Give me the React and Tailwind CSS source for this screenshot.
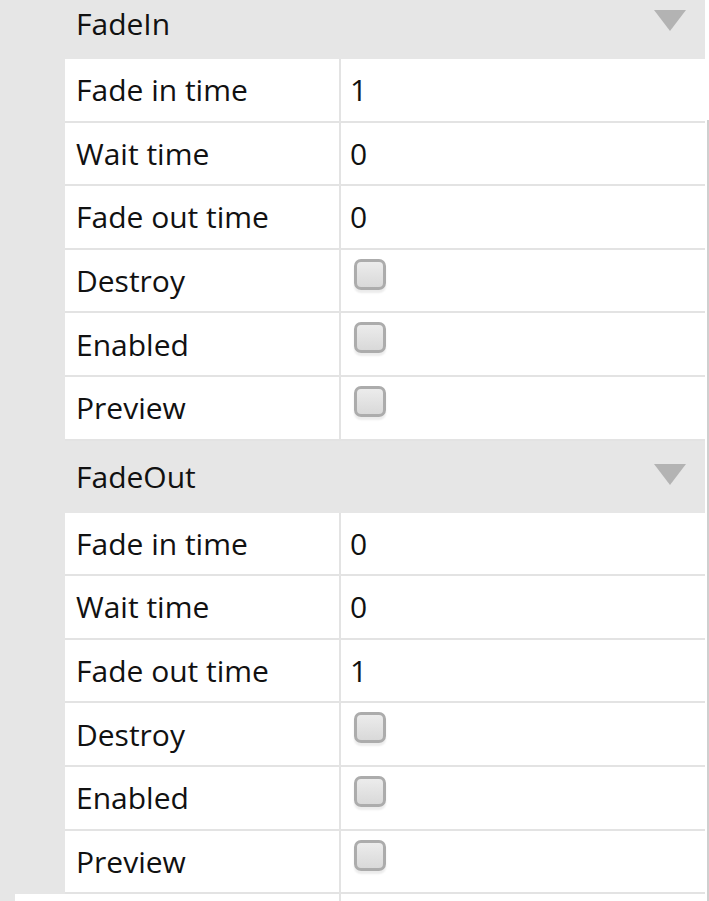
import React from 'react';

const groups = [
  {
    name: 'FadeIn',
    rows: [
      { label: 'Fade in time', value: '1' },
      { label: 'Wait time', value: '0' },
      { label: 'Fade out time', value: '0' },
      { label: 'Destroy', check: true },
      { label: 'Enabled', check: true },
      { label: 'Preview', check: true },
    ],
  },
  {
    name: 'FadeOut',
    rows: [
      { label: 'Fade in time', value: '0' },
      { label: 'Wait time', value: '0' },
      { label: 'Fade out time', value: '1' },
      { label: 'Destroy', check: true },
      { label: 'Enabled', check: true },
      { label: 'Preview', check: true },
    ],
  },
];

function Checkbox() {
  return (
    <div className="mt-[9px] ml-[13px] w-[32px] h-[31px] rounded-[7px] border-[3px] border-[#acacac] bg-gradient-to-b from-[#ececec] to-[#d9d9d9] shadow-[0_3px_2px_rgba(0,0,0,0.08)]" />
  );
}

function Row({ row }) {
  return (
    <div className="flex h-[63.6px] border-b-2 border-[#e3e3e3] bg-white">
      <div className="w-[276px] pl-[11px] flex items-center border-r-2 border-[#e3e3e3]">
        {row.label}
      </div>
      <div className="flex-1 flex">
        {row.check ? (
          <Checkbox />
        ) : (
          <div className="pl-[9px] flex items-center">{row.value}</div>
        )}
      </div>
    </div>
  );
}

function Group({ group }) {
  return (
    <div>
      <div className="h-[72px] flex items-start justify-between bg-[#e6e6e6]">
        <div className="pl-[11px] h-[72px] flex items-center">{group.name}</div>
        <svg className="mt-[23px] mr-[19px]" width="32" height="21" viewBox="0 0 32 21">
          <polygon points="0,0 32,0 16,21" fill="#b3b3b3" />
        </svg>
      </div>
      {group.rows.map((row) => (
        <Row key={row.label} row={row} />
      ))}
    </div>
  );
}

export default function App() {
  return (
    <div
      className="w-[709px] h-[901px] overflow-hidden bg-white text-[30px] text-[#111]"
      style={{ fontFamily: '"Open Sans", "Noto Sans", sans-serif' }}
    >
      <div className="flex">
        <div className="flex-1 -mt-[13px]">
          <div className="flex bg-[#e6e6e6]">
            <div className="w-[65px] shrink-0" />
            <div className="flex-1">
              {groups.map((g) => (
                <Group key={g.name} group={g} />
              ))}
            </div>
          </div>
          <div className="flex h-[40px]">
            <div className="w-[15px] bg-[#e6e6e6]" />
            <div className="w-[326px] border-r-2 border-[#e3e3e3]" />
          </div>
        </div>
        <div className="w-[4px] flex flex-col">
          <div className="h-[120px]" />
          <div className="flex-1 ml-[2px] bg-[#cfcfcf]" />
        </div>
      </div>
    </div>
  );
}
